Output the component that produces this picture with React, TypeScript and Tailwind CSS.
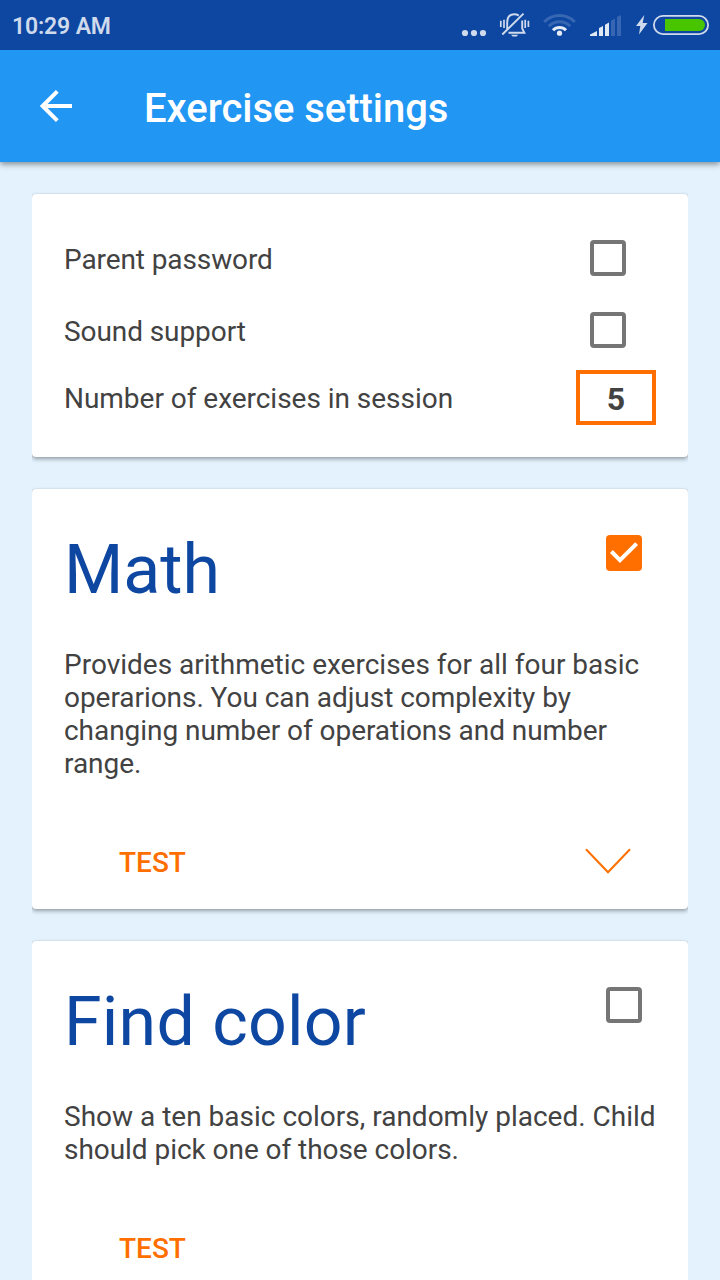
import type { ReactNode } from "react";

function StatusBar() {
  return (
    <div className="relative z-10 flex h-[50px] items-center justify-between bg-[#0d47a1] pl-3">
      <span className="pt-[3px] text-[23px] leading-[27px] font-semibold tracking-[-0.15px] text-[#cfdaec]">10:29 AM</span>
      <svg width="270" height="50" viewBox="0 0 270 50" fill="none">
        <g fill="#cfdaec">
          <circle cx="15" cy="33" r="3.1" />
          <circle cx="24" cy="33" r="3.1" />
          <circle cx="33" cy="33" r="3.1" />
        </g>
        <g stroke="#cfdaec" strokeWidth="1.9">
          <path d="M57.2 29V22.5C57.2 17 60 14.3 64.3 14.3C66 14.3 67.5 14.8 68.8 15.6M72.2 20.5V28.5L74.4 32.8H58.5" />
          <path d="M52.3 34.5L73.5 13.6" strokeWidth="2" />
          <path d="M50.8 20.8V27M54 19.7V28M75.2 19.7V28M78.4 20.8V27" strokeWidth="1.7" />
        </g>
        <path d="M61 34.8H68.2L66.5 36.6H62.7Z" fill="#cfdaec" />
        <g strokeWidth="3">
          <path d="M94.2 22A21.5 21.5 0 0 1 124.8 22" stroke="#3767b3" />
          <path d="M98.8 26.3A15 15 0 0 1 120.2 26.3" stroke="#3767b3" />
          <path d="M103 30.2A9 9 0 0 1 116 30.2" stroke="#e5ecf6" />
        </g>
        <circle cx="109.5" cy="33.2" r="2.6" fill="#e5ecf6" />
        <path d="M140 36V34.6L147 31V36ZM149 36V28L153 26V36ZM155 36V24.8L159 22.5V36Z" fill="#e0e8f3" />
        <path d="M161 36V20.8L165 18.5V36ZM167 36V17L171 15V36Z" fill="#3767b3" />
        <path d="M194.3 15L186 26H190.3L189 34.5L197.5 23H192.7Z" fill="#cfdaec" />
        <rect x="203.9" y="15.9" width="54.2" height="18.2" rx="9.1" stroke="#cfdaec" strokeWidth="1.8" />
        <path d="M215 19H249A6 6 0 0 1 249 31H215Z" fill="#49c500" />
      </svg>
    </div>
  );
}

function Toolbar() {
  return (
    <header className="relative flex h-28 items-center bg-[#2196f3] pl-10 shadow-[0_2px_6px_rgba(0,0,0,0.45)]">
      <svg width="32" height="32" viewBox="0 0 32 32" fill="none" stroke="white" strokeWidth="4">
        <path d="M32 16H3M17.3 1.4L2.7 16L17.3 30.6" />
      </svg>
      <h1 className="ml-[72px] pt-[5px] text-[40px] leading-[47px] font-medium tracking-[-0.03px] text-white">
        Exercise settings
      </h1>
    </header>
  );
}

function Card({ className, children }: { className: string; children: ReactNode }) {
  return (
    <section
      className={`rounded-[4px] bg-white px-8 shadow-[0_2px_4px_rgba(0,0,0,0.35),0_0_1px_rgba(0,0,0,0.2)] [clip-path:inset(-10px_0)] ${className}`}
    >
      {children}
    </section>
  );
}

function Checkbox({ checked = false }: { checked?: boolean }) {
  return checked ? (
    <span className="block size-9 shrink-0 rounded-[4px] bg-[#ff6f00]" role="checkbox" aria-checked="true">
      <svg width="36" height="36" viewBox="0 0 36 36" fill="none" stroke="white" strokeWidth="4">
        <path d="M5.4 16.5L14 25.1L30.6 8.6" />
      </svg>
    </span>
  ) : (
    <span
      className="block size-9 shrink-0 rounded-[4px] border-4 border-[#757575]"
      role="checkbox"
      aria-checked="false"
    />
  );
}

type ExerciseProps = { title: ReactNode; checked?: boolean; expandable?: boolean; lines: string[] };

function Exercise({ title, checked, expandable, lines }: ExerciseProps) {
  return (
    <Card className="pt-[41px] pb-[30px]">
      <div className="flex items-start justify-between pr-3.5">
        <h2 className="text-[68px] leading-[80px] text-[#0d47a1]">{title}</h2>
        <div className="pt-[5px]">
          <Checkbox checked={checked} />
        </div>
      </div>
      <p className="mt-[38px] whitespace-nowrap">
        {lines.map((line, i) => (
          <span key={line} className={i === 0 ? "block" : "block tracking-[-0.05px]"}>
            {line}
          </span>
        ))}
      </p>
      <div className="mt-[66px] flex h-[33px] items-start justify-between pr-[25px] pl-[55px] font-medium text-[#ff6f00]">
        <button className="h-[33px]">TEST</button>
        {expandable && (
          <svg width="46" height="28" viewBox="0 0 46 28" fill="none" stroke="#ff6f00" strokeWidth="2">
            <path d="M1 3.3L23 26.2L45 3.3" />
          </svg>
        )}
      </div>
    </Card>
  );
}

export default function App() {
  return (
    <div className="h-[1280px] w-[720px] overflow-hidden bg-[#e3f2fd] font-['Roboto',sans-serif] text-[28px] leading-[33px] text-[#424242]">
      <StatusBar />
      <Toolbar />
      <main className="flex flex-col gap-8 px-8 pt-8">
        <Card className="h-[263px] pt-7">
          <div className="flex h-[72px] items-center justify-between pr-[30px]">
            <span className="pt-[3px] tracking-[-0.1px]">Parent password</span>
            <Checkbox />
          </div>
          <div className="flex h-[72px] items-center justify-between pr-[30px]">
            <span className="pt-[3px] tracking-[-0.08px]">Sound support</span>
            <Checkbox />
          </div>
          <div className="mt-1 flex h-[55px] items-center justify-between">
            <span className="pt-[2px] tracking-[-0.03px]">Number of exercises in session</span>
            <span className="flex h-[55px] w-20 items-center justify-center border-4 border-[#ff6f00] pt-[3px] text-[32px] font-bold">
              5
            </span>
          </div>
        </Card>
        <Exercise
          title="Math"
          checked
          expandable
          lines={[
            "Provides arithmetic exercises for all four basic",
            "operarions. You can adjust complexity by",
            "changing number of operations and number",
            "range.",
          ]}
        />
        <Exercise
          title={<span className="tracking-[0.25px]">Find color</span>}
          lines={["Show a ten basic colors, randomly placed. Child", "should pick one of those colors."]}
        />
      </main>
    </div>
  );
}
